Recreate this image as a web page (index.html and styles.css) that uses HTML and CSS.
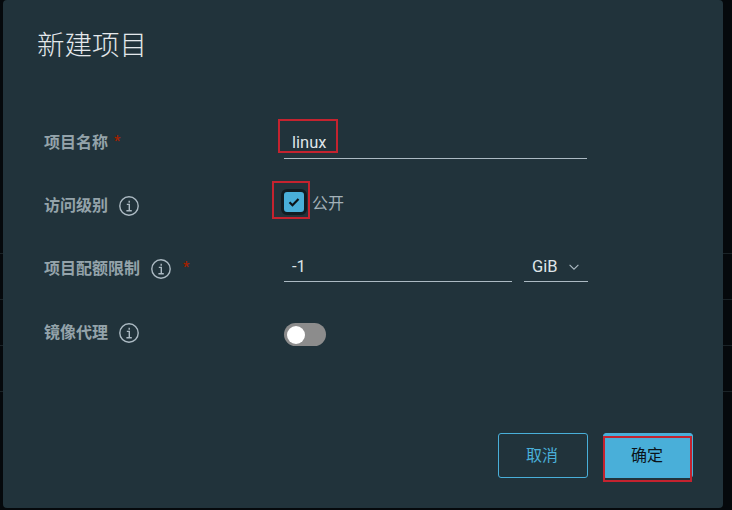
FILE: index.html
```html
<!DOCTYPE html>
<html lang="zh-CN">

<head>

    <meta charset="UTF-8">
    <meta name="viewport" content="width=device-width, initial-scale=1.0">
    <title>新建项目</title>

    <link rel="stylesheet" href="styles.css">

</head>

<body>

    <div class="modal">

        <h1 class="modal-title">新建项目</h1>

        <form class="form">

            <div class="form-row">
                <label class="form-label">项目名称 <span class="required">*</span></label>
                <div class="field field-name">
                    <span class="field-value">linux</span>
                    <span class="mark mark-name"></span>
                </div>
            </div>

            <div class="form-row">
                <label class="form-label">访问级别
                    <svg class="info" viewBox="0 0 20 20"><circle cx="10" cy="10" r="9.2" /><path d="M7.8 8.4h2.5v6.2M7.4 14.8h5.4M10.2 4.8v1.9" /></svg>
                </label>
                <div class="check-wrap">
                    <span class="checkbox">
                        <svg viewBox="0 0 14 14"><path d="M2.5 7.2l3 3 6-6.2" /></svg>
                    </span>
                    <span class="check-label">公开</span>
                    <span class="mark mark-check"></span>
                </div>
            </div>

            <div class="form-row">
                <label class="form-label">项目配额限制
                    <svg class="info" viewBox="0 0 20 20"><circle cx="10" cy="10" r="9.2" /><path d="M7.8 8.4h2.5v6.2M7.4 14.8h5.4M10.2 4.8v1.9" /></svg>
                    <span class="required required-far">*</span>
                </label>
                <div class="quota">
                    <div class="field field-quota"><span class="field-value">-1</span></div>
                    <div class="field field-unit">
                        <span class="field-value">GiB</span>
                        <svg class="chevron" viewBox="0 0 10 6"><path d="M.6 .8l4.4 4.4 4.4-4.4" /></svg>
                    </div>
                </div>
            </div>

            <div class="form-row">
                <label class="form-label">镜像代理
                    <svg class="info" viewBox="0 0 20 20"><circle cx="10" cy="10" r="9.2" /><path d="M7.8 8.4h2.5v6.2M7.4 14.8h5.4M10.2 4.8v1.9" /></svg>
                </label>
                <span class="toggle"><span class="toggle-knob"></span></span>
            </div>

        </form>

        <div class="modal-footer">
            <button class="btn btn-cancel" type="button">取消</button>
            <button class="btn btn-ok" type="button">确定<span class="mark mark-ok"></span></button>
        </div>

    </div>

</body>

</html>
```

FILE: styles.css
```css
* {
    box-sizing: border-box;
}

html, body {
    height: 100%;
}

body {
    margin: 0;
    overflow: hidden;
    background-color: #05090c;
    /* table rows of the page behind the dialog */
    background-image: repeating-linear-gradient(to bottom, #1a2327 0, #1a2327 1px, transparent 1px, transparent 46px);
    background-position: 0 253px;
    background-size: 100% 140px;
    background-repeat: no-repeat;
    font-family: Roboto, "Noto Sans CJK SC", sans-serif;
}

.modal {
    display: flex;
    flex-direction: column;
    width: 720px;
    height: 508px;
    margin-left: 3px;
    padding: 28px 30px 30px 34px;
    background-color: #21333b;
    border-radius: 4px;
}

.modal-title {
    margin: 0;
    height: 35px;
    font-size: 27.5px;
    line-height: 35px;
    font-weight: 300;
    color: #e4e8eb;
}

.form {
    flex: 1;
    padding: 47px 0 0 7px;
}

.form-row {
    display: flex;
    align-items: center;
    height: 63.4px;
}

.form-label {
    display: flex;
    align-items: center;
    width: 240px;
    margin-top: -2px;
    font-size: 16px;
    font-weight: 700;
    color: #94a3aa;
}

.required {
    margin-left: 6px;
    color: #a32100;
    font-size: 14px;
}

.required-far {
    margin-left: 12px;
}

.info {
    width: 20px;
    height: 20px;
    margin-left: 11px;
    margin-top: 4px;
    fill: none;
    stroke: #acbac3;
    stroke-width: 1.4;
}

.field {
    position: relative;
    display: flex;
    align-items: flex-end;
    height: 34px;
    padding: 0 0 5px 8px;
    border-bottom: 1px solid #acbac3;
    color: #dfe5e8;
    font-size: 16.5px;
    line-height: 20px;
}

.field-name {
    width: 303px;
}

.field-quota {
    width: 228px;
    padding-bottom: 4px;
}

.field-unit {
    width: 64px;
    padding-bottom: 4px;
}

.quota {
    display: flex;
    gap: 12px;
    margin-top: -7px;
}

.chevron {
    width: 10px;
    height: 6px;
    margin: 0 0 7px 11px;
    fill: none;
    stroke: #acbac3;
    stroke-width: 1.1;
}

.check-wrap {
    position: relative;
    display: flex;
    align-items: center;
    gap: 5px;
    margin-left: -3px;
    margin-top: -6px;
}

.checkbox {
    display: flex;
    align-items: center;
    justify-content: center;
    width: 26px;
    height: 26px;
    background-color: #49afd9;
    border: 3px solid #101c22;
    border-radius: 6px;
}

.checkbox svg {
    width: 14px;
    height: 14px;
    fill: none;
    stroke: #0c1419;
    stroke-width: 2.2;
}

.check-label {
    font-size: 16px;
    color: #a3b1b8;
}

.toggle {
    display: flex;
    align-items: center;
    width: 42px;
    height: 23px;
    margin-top: 6px;
    padding-left: 3px;
    background-color: #8c8c8c;
    border-radius: 12px;
}

.toggle-knob {
    width: 18px;
    height: 18px;
    background-color: #fff;
    border-radius: 50%;
}

.modal-footer {
    display: flex;
    justify-content: flex-end;
    gap: 15px;
}

.btn {
    position: relative;
    width: 90px;
    height: 45px;
    padding: 0 2px 3px 0;
    border: 1px solid #49afd9;
    border-radius: 3px;
    font-family: inherit;
    font-size: 16px;
}

.btn-cancel {
    background-color: transparent;
    color: #49afd9;
}

.btn-ok {
    background-color: #49afd9;
    color: #0c1419;
}

/* red boxes drawn over the screenshot */
.mark {
    position: absolute;
    border: 2px solid #c4232f;
}

.mark-name {
    left: -6px;
    top: -6px;
    width: 60px;
    height: 34px;
}

.mark-check {
    left: -9px;
    top: -8px;
    width: 38px;
    height: 38px;
}

.mark-ok {
    left: -1px;
    top: 2px;
    width: 89px;
    height: 46px;
}
```
